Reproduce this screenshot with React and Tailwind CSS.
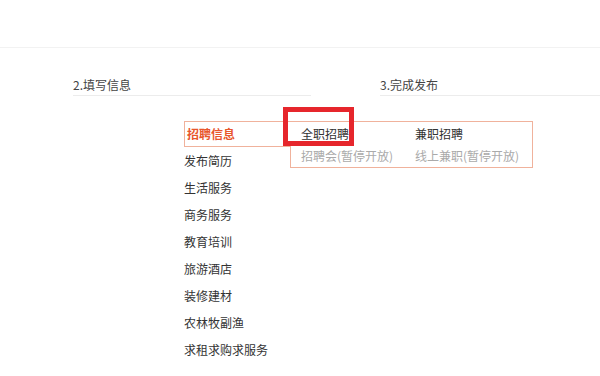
import React from "react";

const font = { fontFamily: '"Noto Sans CJK SC", "Noto Sans", sans-serif' };

export default function App() {
  const items = ["发布简历", "生活服务", "商务服务", "教育培训", "旅游酒店", "装修建材", "农林牧副渔", "求租求购求服务"];
  return (
    <div className="w-[600px] h-[376px] bg-white overflow-hidden text-[12px] text-[#333]" style={font}>
      <div className="h-[48px] border-b border-[#f2f2f2]" />
      <div className="flex">
        <div className="ml-[73px] w-[238px] pt-[29px] pb-[2px] leading-4 border-b border-[#ececec] text-[#444]">2.填写信息</div>
        <div className="ml-[69px] flex-1 pt-[29px] pb-[2px] leading-4 border-b border-[#ececec] text-[#444]">3.完成发布</div>
      </div>
      <div className="relative ml-[184px] mt-[25px]">
        <div className="relative z-10 w-[107px] h-[26px] border border-r-0 border-[#f0b29c] bg-white flex items-center pl-[2px] font-bold text-[#e8562c]">
          招聘信息
        </div>
        {items.map((t) => (
          <div key={t} className="h-[27px] flex items-center">{t}</div>
        ))}
        <div className="absolute left-[106px] top-0 w-[243px] h-[47px] border border-[#f0b29c] bg-white">
          <div className="flex h-[23px] items-center pl-[10px]">
            <div className="w-[114px]">全职招聘</div>
            <div>兼职招聘</div>
          </div>
          <div className="flex h-[22px] items-center pl-[10px] text-[#aaa]">
            <div className="w-[114px]">招聘会(暂停开放)</div>
            <div>线上兼职(暂停开放)</div>
          </div>
        </div>
        <div className="absolute left-[99px] top-[-14px] w-[71px] h-[39px] border-[5px] border-[#e6262c] z-20" />
      </div>
    </div>
  );
}
